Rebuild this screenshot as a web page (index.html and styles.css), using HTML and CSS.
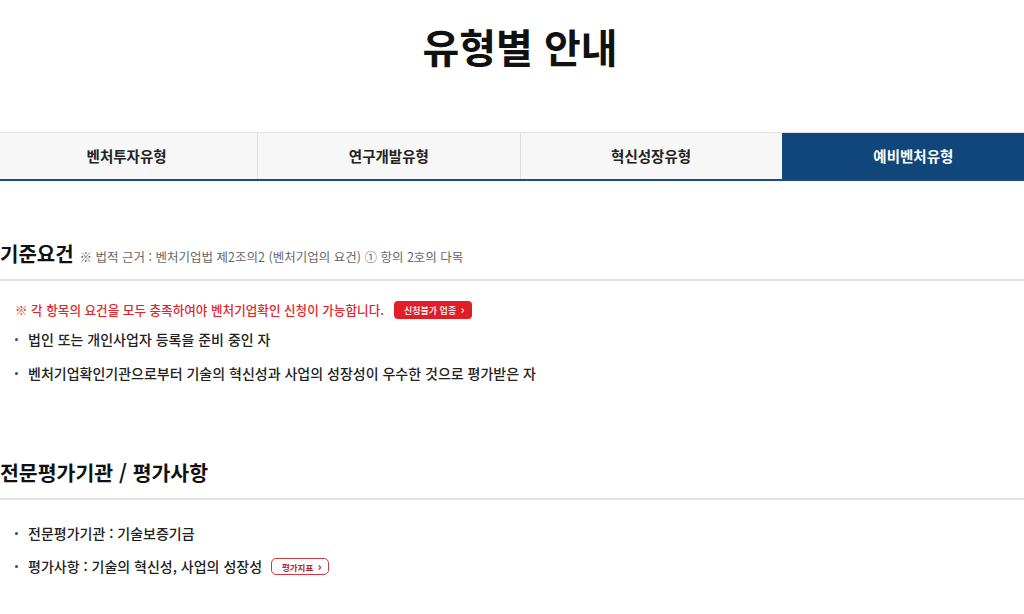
FILE: index.html
```html
<!DOCTYPE html>
<html lang="ko">
<head>
    <meta charset="UTF-8">
    <meta name="viewport" content="width=device-width, initial-scale=1.0">
    <title>유형별 안내</title>
    <link rel="stylesheet" href="styles.css">
</head>
<body>
<div class="wrap">

    <h1 class="page-title">유형별 안내</h1>

    <div class="tabs">
        <div class="tab">벤처투자유형</div>
        <div class="tab">연구개발유형</div>
        <div class="tab">혁신성장유형</div>
        <div class="tab active">예비벤처유형</div>
    </div>

    <div class="section first">
        <div class="sec-head">
            <h2>기준요건</h2>
            <span class="sub">※ 법적 근거 : 벤처기업법 제2조의2 (벤처기업의 요건) ① 항의 2호의 다목</span>
        </div>
        <p class="notice">※ 각 항목의 요건을 모두 충족하여야 벤처기업확인 신청이 가능합니다. <span class="btn-red">신청불가 업종 <b>›</b></span></p>
        <ul class="list">
            <li>법인 또는 개인사업자 등록을 준비 중인 자</li>
            <li>벤처기업확인기관으로부터 기술의 혁신성과 사업의 성장성이 우수한 것으로 평가받은 자</li>
        </ul>
    </div>

    <div class="section second">
        <div class="sec-head">
            <h2>전문평가기관 / 평가사항</h2>
        </div>
        <ul class="list">
            <li>전문평가기관 : 기술보증기금</li>
            <li>평가사항 : 기술의 혁신성, 사업의 성장성 <span class="btn-line">평가지표 <b>›</b></span></li>
        </ul>
    </div>

</div>
</body>
</html>
```

FILE: styles.css
```css
body {
    margin: 0;
    background: #fff;
    color: #222;
    font-family: "Noto Sans CJK KR", "Noto Sans", sans-serif;
    overflow: hidden;
}
/* 화면보다 넓은 본문 영역 (좌측 4px, 우측 20px 잘림) */
.wrap {
    margin: 0 -20px 0 -4px;
}
.page-title {
    margin: 0;
    padding-top: 22px;
    font-size: 40px;
    line-height: 49px;
    font-weight: 700;
    text-align: center;
    color: #111;
}
/* 탭 메뉴 */
.tabs {
    display: flex;
    margin-top: 61px;
    border-top: 1px solid #e2e2e2;
    border-bottom: 2px solid #1d4d7d;
}
.tab {
    flex: 1;
    height: 46px;
    line-height: 46px;
    text-align: center;
    font-size: 14.5px;
    font-weight: 700;
    background: #f7f7f7;
    border-left: 1px solid #dedede;
    color: #222;
}
.tab:first-child {
    border-left: none;
}
.tab.active {
    background: #11467a;
    color: #fff;
    border-left-color: #11467a;
}
/* 섹션 */
.section {
    padding-left: 4px;
}
.section.first {
    margin-top: 58px;
}
.section.second {
    margin-top: 74px;
}
.sec-head {
    display: flex;
    align-items: baseline;
    gap: 6px;
    margin-left: -4px;
    padding: 0 0 10px 4px;
    border-bottom: 2px solid #e2e2e2;
}
.second .sec-head {
    padding-bottom: 11px;
}
.sec-head h2 {
    margin: 0;
    font-size: 20.5px;
    line-height: 30px;
    font-weight: 700;
    color: #111;
}
.first .sec-head h2 {
    font-size: 20px;
}
.sub {
    font-size: 12.5px;
    color: #666;
}
.notice {
    margin: 19px 0 0 15px;
    font-size: 12.6px;
    line-height: 20px;
    font-weight: 500;
    color: #e3262a;
    display: flex;
    align-items: center;
    gap: 10px;
}
.btn-red {
    display: inline-block;
    background: #e11d26;
    color: #fff;
    font-size: 9px;
    font-weight: 500;
    line-height: 17px;
    padding: 0 8px 0 10px;
    border-radius: 4px;
}
.btn-line {
    display: inline-block;
    margin-left: 5px;
    border: 1.5px solid #cf3a40;
    color: #b3262c;
    font-size: 8.5px;
    font-weight: 700;
    line-height: 14px;
    padding: 0 7px 0 10px;
    border-radius: 5px;
    vertical-align: 1px;
}
.btn-red b, .btn-line b {
    font-size: 11px;
    margin-left: 2px;
}
.list {
    list-style: none;
    margin: 9px 0 0;
    padding: 0 0 0 15px;
}
.second .list {
    margin-top: 23px;
}
.list li {
    position: relative;
    padding-left: 13px;
    font-size: 14px;
    line-height: 20px;
    font-weight: 500;
    color: #222;
    margin-bottom: 14px;
}
.second .list li {
    margin-bottom: 13px;
}
.list li::before {
    content: "";
    position: absolute;
    left: 0;
    top: 9px;
    width: 3px;
    height: 3px;
    border-radius: 50%;
    background: #2f5070;
}
```
